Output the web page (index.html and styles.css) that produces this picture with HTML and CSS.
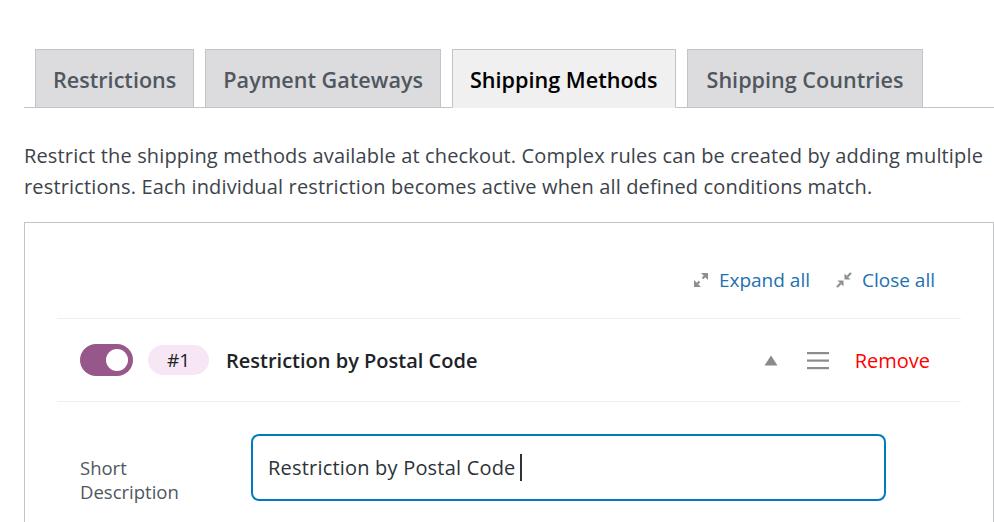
FILE: index.html
```html
<!DOCTYPE html>
<html>
<head>
<meta charset="utf-8">
<link rel="stylesheet" href="styles.css">
</head>
<body>
<div class="page">
  <nav class="tabs">
    <a class="tab">Restrictions</a>
    <a class="tab">Payment Gateways</a>
    <a class="tab active">Shipping Methods</a>
    <a class="tab">Shipping Countries</a>
  </nav>
  <p class="desc">Restrict the shipping methods available at checkout. Complex rules can be created by adding multiple restrictions. Each individual restriction becomes active when all defined conditions match.</p>
  <div class="box">
    <div class="toolbar">
      <a class="tool">
        <svg width="16" height="16" viewBox="0 0 16 16"><g fill="#8c8f94"><path d="M9.5 6.5 L13 3 M3 13 L6.5 9.5" stroke="#8c8f94" stroke-width="2.2" fill="none"/><polygon points="8,1 15,1 15,8"/><polygon points="1,8 1,15 8,15"/></g></svg>
        <span>Expand all</span>
      </a>
      <a class="tool">
        <svg width="16" height="16" viewBox="0 0 16 16"><g fill="#8c8f94"><path d="M15 1 L11.5 4.5 M1 15 L4.5 11.5" stroke="#8c8f94" stroke-width="2.2" fill="none"/><polygon points="8.5,1.5 8.5,7.5 14.5,7.5"/><polygon points="1.5,8.5 7.5,8.5 7.5,14.5"/></g></svg>
        <span>Close all</span>
      </a>
    </div>
    <div class="item">
      <div class="item-head">
        <span class="toggle"><span class="knob"></span></span>
        <span class="badge">#1</span>
        <span class="title">Restriction by Postal Code</span>
        <span class="actions">
          <svg class="caret" width="14" height="11" viewBox="0 0 14 11"><polygon points="7,0.5 13.5,10.5 0.5,10.5" fill="#8a8a8a"/></svg>
          <svg class="handle" width="22" height="20" viewBox="0 0 22 20"><g fill="#8c8c8c"><rect x="0" y="2" width="22" height="2.2"/><rect x="0" y="9.5" width="22" height="2.2"/><rect x="0" y="17" width="22" height="2.2"/></g></svg>
          <a class="remove">Remove</a>
        </span>
      </div>
      <div class="field">
        <label class="label">Short<br>Description</label>
        <div class="input">Restriction by Postal Code<span class="cursor"></span></div>
      </div>
    </div>
  </div>
</div>
</body>
</html>
```

FILE: styles.css
```css
html, body {
  margin: 0;
  padding: 0;
  background: #fff;
  overflow: hidden;
}
body {
  width: 994px;
  height: 522px;
  font-family: "Open Sans", "Noto Sans", sans-serif;
  color: #3c434a;
}
.page {
  padding: 49px 0 0 24px;
}
.tabs {
  display: flex;
  gap: 11px;
  padding-left: 11px;
  border-bottom: 1px solid #c3c4c7;
  width: 1000px;
}
.tab {
  display: flex;
  align-items: center;
  height: 56px;
  padding: 1px 17px 0;
  margin-bottom: -1px;
  background: #dcdcde;
  border: 1px solid #c3c4c7;
  border-bottom: none;
  font-size: 21.6px;
  font-weight: 600;
  color: #50575e;
}
.tab:last-child {
  padding: 1px 19px 0;
}
.tab.active {
  background: #f0f0f1;
  color: #000;
  border-bottom: 1px solid #f0f0f1;
}
.desc {
  margin: 32px 0 20px;
  font-size: 20px;
  letter-spacing: 0.15px;
  line-height: 31px;
  width: 968px;
}
.box {
  width: 970px;
  border: 1px solid #c3c4c7;
  background: #fff;
  padding: 0 32px;
  box-sizing: border-box;
  height: 320px;
}
.toolbar {
  display: flex;
  justify-content: flex-end;
  gap: 26px;
  padding: 44px 26px 0 0;
  height: 51px;
  border-bottom: 1px solid #f0f0f1;
}
.tool {
  display: flex;
  align-items: center;
  gap: 10px;
  height: 26px;
  color: #2271b1;
  font-size: 19px;
}
.item-head {
  display: flex;
  align-items: center;
  height: 82px;
  padding-left: 23px;
  border-bottom: 1px solid #f0f0f1;
}
.toggle {
  width: 53px;
  height: 32px;
  border-radius: 16px;
  background: #96588a;
  position: relative;
  flex-shrink: 0;
}
.knob {
  position: absolute;
  right: 5px;
  top: 5px;
  width: 22px;
  height: 22px;
  border-radius: 50%;
  background: #fff;
}
.badge {
  margin-left: 15px;
  width: 61px;
  height: 30px;
  border-radius: 15px;
  background: #f7e6f3;
  color: #1d2327;
  font-size: 19px;
  display: flex;
  align-items: center;
  justify-content: center;
}
.title {
  margin-left: 17px;
  font-size: 20px;
  font-weight: 600;
  color: #1d2327;
}
.actions {
  margin-left: auto;
  display: flex;
  align-items: center;
  margin-right: 31px;
}
.caret {
  margin-right: 29px;
}
.handle {
  margin-right: 26px;
}
.remove {
  color: #ff0000;
  font-size: 20px;
}
.field {
  display: flex;
  align-items: flex-start;
  padding: 32px 0 0 23px;
}
.label {
  width: 171px;
  padding-top: 22px;
  font-size: 18.5px;
  line-height: 24px;
  color: #50575e;
}
.input {
  width: 635px;
  height: 67px;
  box-sizing: border-box;
  border: 2px solid #007cba;
  border-radius: 8px;
  padding: 0 15px;
  display: flex;
  align-items: center;
  font-size: 20px;
  letter-spacing: 0.2px;
  color: #2c3338;
}
.cursor {
  display: inline-block;
  width: 2px;
  height: 27px;
  background: #2c3338;
  margin-left: 4px;
}
```
